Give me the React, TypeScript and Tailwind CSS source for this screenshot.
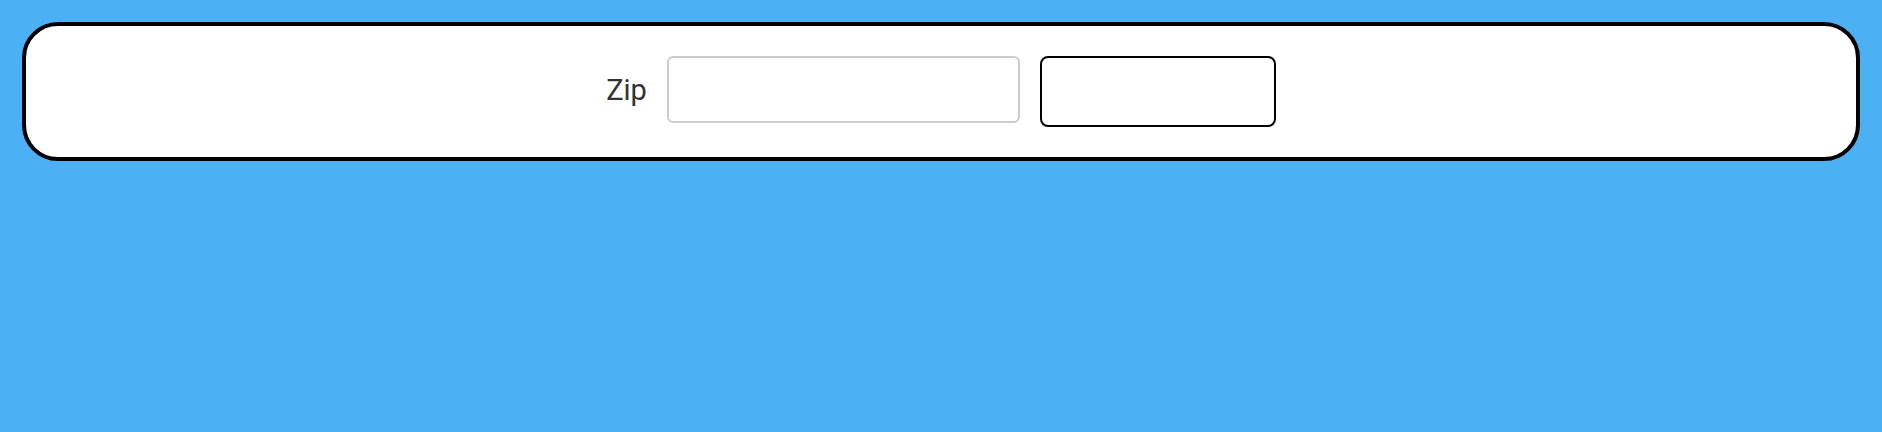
export default function App() {
  return (
    <div className="min-h-screen w-full bg-[#4cb1f4] p-[22px]" style={{ fontFamily: 'Roboto, "Liberation Sans", Arial, sans-serif' }}>
      <form
        className="flex items-start justify-center gap-[20px] rounded-[36px] border-4 border-black bg-white py-[30px]"
        onSubmit={(e) => e.preventDefault()}
      >
        <label htmlFor="zip" className="flex h-[67px] items-center pt-[3px] text-[29px] text-[#333333]">
          Zip
        </label>
        <input
          id="zip"
          type="text"
          className="h-[67px] w-[353px] rounded-[6px] border-2 border-[#cccccc] bg-white px-3 text-[24px] outline-none"
        />
        <button
          type="submit"
          className="h-[71px] w-[236px] rounded-[8px] border-2 border-black bg-white"
        ></button>
      </form>
    </div>
  );
}
